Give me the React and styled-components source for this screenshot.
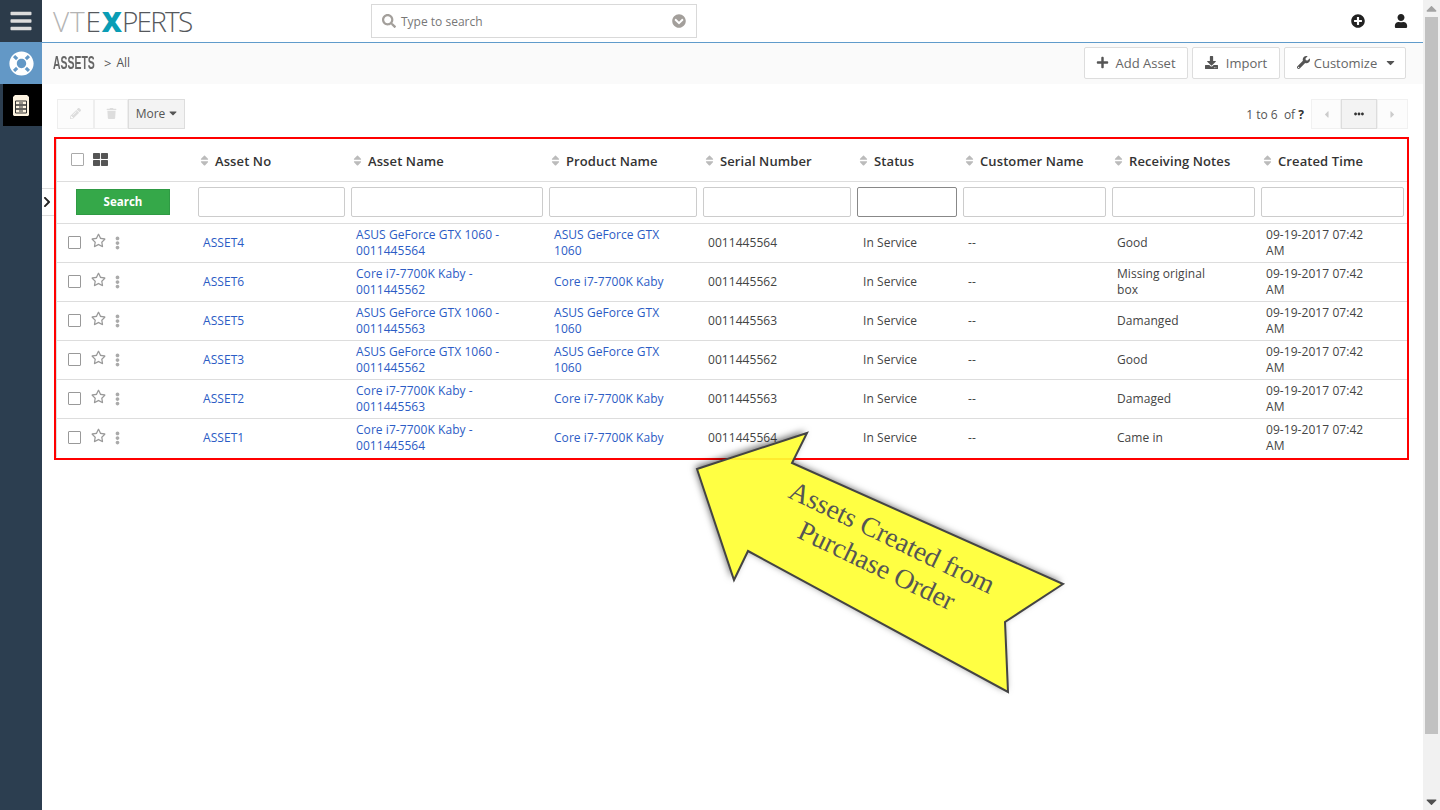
import React from "react";
import styled, { createGlobalStyle } from "styled-components";
import {
  FaBars,
  FaLifeRing,
  FaPlusCircle,
  FaUser,
  FaPlus,
  FaDownload,
  FaWrench,
  FaPencilAlt,
  FaTrash,
  FaSearch,
  FaChevronCircleDown,
  FaChevronRight,
  FaSort,
  FaRegStar,
  FaEllipsisV,
  FaEllipsisH,
  FaThLarge,
  FaCaretLeft,
  FaCaretRight,
  FaCaretDown,
  FaCaretUp,
} from "react-icons/fa";

const COLUMNS = ["Asset No", "Asset Name", "Product Name", "Serial Number", "Status", "Customer Name", "Receiving Notes", "Created Time"];

const ROWS = [
  ["ASSET4", "ASUS GeForce GTX 1060 - 0011445564", "ASUS GeForce GTX 1060", "0011445564", "Good"],
  ["ASSET6", "Core i7-7700K Kaby - 0011445562", "Core i7-7700K Kaby", "0011445562", "Missing original box"],
  ["ASSET5", "ASUS GeForce GTX 1060 - 0011445563", "ASUS GeForce GTX 1060", "0011445563", "Damanged"],
  ["ASSET3", "ASUS GeForce GTX 1060 - 0011445562", "ASUS GeForce GTX 1060", "0011445562", "Good"],
  ["ASSET2", "Core i7-7700K Kaby - 0011445563", "Core i7-7700K Kaby", "0011445563", "Damaged"],
  ["ASSET1", "Core i7-7700K Kaby - 0011445564", "Core i7-7700K Kaby", "0011445564", "Came in"],
];

const ARROW_POINTS = "27,38 137,2 122,32 393,153 335,191 338,261 78,120 64,149";

export default function App() {
  return (
    <Page>
      <GlobalStyle />
      <Sidebar>
        <Burger><FaBars /></Burger>
        <HelpTile><FaLifeRing /></HelpTile>
        <ModuleTile>
          <svg width="16" height="21" viewBox="0 0 16 21">
            <path d="M2 0h12l2 2v18l-1 1H1l-1-1V2z" fill="#fdf3e0" />
            <path d="M2.500 6h11v4h-11zM2.500 10h11v4h-11zM2.500 14h11v4h-11z" fill="none" stroke="#333" strokeWidth="1" />
            <path d="M6 8h4M6 12h4M6 16h4" stroke="#333" strokeWidth="1.200" />
          </svg>
        </ModuleTile>
      </Sidebar>

      <Main>
        <TopBar>
          <Logo>
            <LogoLight>VT</LogoLight>E<LogoX>X</LogoX><LogoTail>PERTS</LogoTail>
          </Logo>
          <SearchBox>
            <FaSearch />
            <SearchText>Type to search</SearchText>
            <FaChevronCircleDown />
          </SearchBox>
          <TopIcons>
            <FaPlusCircle />
            <FaUser />
          </TopIcons>
        </TopBar>

        <SubHeader>
          <Crumbs>
            <ModuleName>ASSETS</ModuleName>
            <Caret>&gt;</Caret>
            <CrumbAll>All</CrumbAll>
          </Crumbs>
          <HeaderActions>
            <ActionButton $width={104} $gap={6}><FaPlus /> Add Asset</ActionButton>
            <ActionButton $width={88} $gap={8}><FaDownload /> Import</ActionButton>
            <ActionButton $width={122} $gap={4} $pad={4}>
              <FaWrench /> Customize <ButtonCaret />
            </ActionButton>
          </HeaderActions>
        </SubHeader>

        <Content>
          <CollapseTab><FaChevronRight /></CollapseTab>
          <Toolbar>
            <ToolGroup>
              <ToolButton $width={37}><FaPencilAlt /></ToolButton>
              <ToolButton $width={34}><FaTrash /></ToolButton>
              <MoreButton>More <FaCaretDown /></MoreButton>
            </ToolGroup>
            <Paging>
              <PageCount>1 to 6&nbsp; of <b>?</b></PageCount>
              <Pager>
                <PagerButton $width={30}><FaCaretLeft /></PagerButton>
                <PagerButton $width={36} $active><FaEllipsisH /></PagerButton>
                <PagerButton $width={31}><FaCaretRight /></PagerButton>
              </Pager>
            </Paging>
          </Toolbar>

          <TableFrame>
            <HeadRow>
              <HeadTools>
                <HeadCheck />
                <FaThLarge />
              </HeadTools>
              {COLUMNS.map((c) => (
                <HeadCell key={c}><FaSort />{c}</HeadCell>
              ))}
            </HeadRow>
            <FilterRow>
              <SearchCell><SearchButton>Search</SearchButton></SearchCell>
              {COLUMNS.map((c) => (
                <FilterCell key={c}><FilterInput $focused={c === "Status"} /></FilterCell>
              ))}
            </FilterRow>
            {ROWS.map((r) => (
              <DataRow key={r[0]}>
                <RowTools>
                  <RowCheck />
                  <FaRegStar />
                  <FaEllipsisV />
                </RowTools>
                <Cell><Linked>{r[0]}</Linked></Cell>
                <Cell><Linked>{r[1]}</Linked></Cell>
                <Cell><Linked>{r[2]}</Linked></Cell>
                <Cell>{r[3]}</Cell>
                <StatusCell>In Service</StatusCell>
                <Cell>--</Cell>
                <Cell>{r[4]}</Cell>
                <Cell>09-19-2017 07:42 AM</Cell>
              </DataRow>
            ))}
          </TableFrame>

          <Callout width="400" height="300" viewBox="0 0 400 300">
            <defs>
              <filter id="callout-shadow" x="-10%" y="-10%" width="120%" height="120%">
                <feGaussianBlur in="SourceAlpha" stdDeviation="3.500" />
                <feOffset dx="-2" dy="-2" result="blur" />
                <feFlood floodColor="#000" floodOpacity="0.6" />
                <feComposite in2="blur" operator="in" />
                <feComposite in2="SourceAlpha" operator="out" />
              </filter>
            </defs>
            <polygon points={ARROW_POINTS} fill="#000" filter="url(#callout-shadow)" />
            <polygon points={ARROW_POINTS} fill="#ffff33" fillOpacity="0.92" stroke="#444" strokeWidth="2" />
            <CalloutText transform="translate(117 66) rotate(25.700)">Assets Created from</CalloutText>
            <CalloutText transform="translate(126 106) rotate(25.700)">Purchase Order</CalloutText>
          </Callout>
        </Content>
      </Main>

      <Scrollbar>
        <FaCaretUp />
        <Thumb />
        <ScrollDown />
      </Scrollbar>
    </Page>
  );
}

const GlobalStyle = createGlobalStyle`
  html, body {
    margin: 0;
    padding: 0;
    background: #fff;
    overflow: hidden;
  }
  * {
    box-sizing: border-box;
  }
`;

const GRID = "138px 153px 198px 154px 154px 106px 149px 149px 149px";

const Page = styled.div`
  display: flex;
  width: 1440px;
  height: 810px;
  overflow: hidden;
  font-family: "Open Sans", sans-serif;
  font-size: 12px;
  color: #444;
`;

const Sidebar = styled.aside`
  width: 42px;
  flex: none;
  background: #2c3e50;
  display: flex;
  flex-direction: column;
`;

const Burger = styled.div`
  height: 42px;
  display: flex;
  align-items: center;
  justify-content: center;
  background: #2c3b4a;
  color: #dcdcdc;
  font-size: 24px;
`;

const HelpTile = styled.div`
  height: 42px;
  display: flex;
  align-items: center;
  justify-content: center;
  background: #6398c6;
  color: #fff;
  font-size: 25px;
`;

const ModuleTile = styled.div`
  height: 42px;
  margin-left: 3px;
  padding-right: 3px;
  display: flex;
  align-items: center;
  justify-content: center;
  background: #000;
`;

const Main = styled.main`
  flex: 1;
  min-width: 0;
  display: flex;
  flex-direction: column;
`;

const TopBar = styled.header`
  height: 43px;
  flex: none;
  display: flex;
  align-items: center;
  border-bottom: 1px solid #5f9bcb;
  background: #fff;
`;

const Logo = styled.div`
  width: 329px;
  padding-left: 11px;
  font-family: "Open Sans", sans-serif;
  font-weight: 300;
  font-size: 28px;
  letter-spacing: 0.8px;
  color: #55585c;
`;

const LogoLight = styled.span`
  color: #b4b4b4;
`;

const LogoX = styled.span`
  font-weight: 800;
  letter-spacing: 0;
  color: #0a9db5;
`;

const LogoTail = styled.span`
  letter-spacing: -1.8px;
`;

const SearchBox = styled.div`
  width: 326px;
  height: 34px;
  display: flex;
  align-items: center;
  padding: 0 10px 0 10px;
  border: 1px solid #d9d9d9;
  color: #a39f9b;
  font-size: 14px;
`;

const SearchText = styled.span`
  flex: 1;
  margin-left: 5px;
  font-size: 12px;
  color: #777;
`;

const TopIcons = styled.div`
  margin-left: auto;
  display: flex;
  align-items: center;
  gap: 29px;
  padding-right: 15px;
  color: #222;
  font-size: 14px;
`;

const SubHeader = styled.div`
  height: 41px;
  flex: none;
  display: flex;
  align-items: center;
  justify-content: space-between;
  padding: 0 17px 2px 11px;
  background: #fafafa;
`;

const Crumbs = styled.div`
  display: flex;
  align-items: center;
  gap: 5px;
`;

const ModuleName = styled.span`
  width: 46px;
  font-family: "Liberation Sans", sans-serif;
  font-weight: 700;
  font-size: 19px;
  color: #666;
  transform: scaleX(0.55);
  transform-origin: left center;
`;

const Caret = styled.span`
  font-size: 13px;
  color: #555;
`;

const CrumbAll = styled.span`
  font-size: 12px;
  color: #555;
`;

const HeaderActions = styled.div`
  display: flex;
  gap: 4px;
`;

const ActionButton = styled.button`
  width: ${(p) => p.$width}px;
  height: 32px;
  display: flex;
  align-items: center;
  justify-content: center;
  gap: ${(p) => p.$gap}px;
  padding: 0 0 0 ${(p) => p.$pad || 0}px;
  border: 1px solid #ddd;
  border-radius: 2px;
  background: #fff;
  color: #666;
  font-family: "Open Sans", sans-serif;
  font-size: 13px;

  svg {
    color: #555;
    font-size: 13px;
  }
`;

const ButtonCaret = styled(FaCaretDown)`
  margin-left: 3px;
`;

const Content = styled.div`
  position: relative;
  flex: 1;
  padding: 15px 15px 0 12px;
`;

const CollapseTab = styled.div`
  position: absolute;
  left: 0;
  top: 104px;
  width: 12px;
  height: 28px;
  padding-right: 2px;
  display: flex;
  align-items: center;
  justify-content: center;
  border-top: 1px solid #ddd;
  border-bottom: 1px solid #ddd;
  background: #fff;
  color: #222;
  font-size: 12px;
`;

const Toolbar = styled.div`
  display: flex;
  justify-content: space-between;
  align-items: center;
  height: 30px;
  padding-left: 3px;
`;

const ToolGroup = styled.div`
  display: flex;
  height: 100%;
`;

const ToolButton = styled.button`
  width: ${(p) => p.$width}px;
  padding: 0;
  border: 1px solid #eee;
  background: #fcfcfc;
  color: #ddd;
  font-size: 11px;
`;

const MoreButton = styled.button`
  width: 57px;
  height: 30px;
  padding: 0 0 2px 2px;
  display: flex;
  align-items: center;
  justify-content: center;
  gap: 2px;
  border: 1px solid #ddd;
  background: #f3f3f3;
  color: #555;
  font-family: "Open Sans", sans-serif;
  font-size: 12px;
`;

const Paging = styled.div`
  display: flex;
  align-items: center;
  height: 100%;
  gap: 7px;
`;

const PageCount = styled.span`
  color: #555;

  b {
    color: #333;
  }
`;

const Pager = styled.div`
  display: flex;
  height: 100%;
`;

const PagerButton = styled.button`
  width: ${(p) => p.$width}px;
  padding: 0;
  display: flex;
  align-items: center;
  justify-content: center;
  border: 1px solid ${(p) => (p.$active ? "#ddd" : "#f1f1f1")};
  background: ${(p) => (p.$active ? "#f3f3f3" : "#fcfcfc")};
  color: ${(p) => (p.$active ? "#333" : "#ccc")};
  font-size: ${(p) => (p.$active ? "10px" : "11px")};
`;

const TableFrame = styled.section`
  margin: 8px 0 0;
  width: 1355px;
  height: 323px;
  border: 2px solid #f00;
`;

const HeadRow = styled.div`
  display: grid;
  grid-template-columns: ${GRID};
  height: 43px;
  padding-top: 1px;
  border-left: 1px solid #ddd;
  border-bottom: 1px solid #ddd;
  align-items: center;
`;

const HeadTools = styled.div`
  display: flex;
  align-items: center;
  gap: 9px;
  padding-left: 14px;
  color: #555;
  font-size: 15px;

  svg {
    margin-top: -2px;
  }
`;

const HeadCheck = styled.span`
  width: 13px;
  height: 13px;
  margin-top: -2px;
  border: 1px solid #aaa;
  border-radius: 1px;
  background: #fff;
`;

const HeadCell = styled.div`
  display: flex;
  align-items: center;
  gap: 6px;
  padding-left: 5px;
  font-weight: 600;
  font-size: 13px;
  letter-spacing: 0.1px;
  color: #333;
  white-space: nowrap;

  svg {
    color: #bbb;
    width: 9px;
    height: 13px;
  }
`;

const FilterRow = styled.div`
  display: grid;
  grid-template-columns: ${GRID};
  height: 42px;
  padding-bottom: 1px;
  border-left: 1px solid #ddd;
  border-bottom: 1px solid #ddd;
  align-items: center;
`;

const SearchCell = styled.div`
  padding: 0 0 1px 19px;
`;

const SearchButton = styled.button`
  display: block;
  width: 94px;
  height: 26px;
  padding: 0;
  border: 1px solid #2f9a44;
  background: #35a849;
  color: #fff;
  font-family: "Open Sans", sans-serif;
  font-size: 11.500px;
  font-weight: 700;
`;

const FilterCell = styled.div`
  padding: 0 3px;
`;

const FilterInput = styled.input`
  display: block;
  width: 100%;
  height: 30px;
  border: 1px solid ${(p) => (p.$focused ? "#888" : "#ccc")};
  border-radius: 2px;
  background: #fff;
`;

const DataRow = styled.div`
  display: grid;
  grid-template-columns: ${GRID};
  height: 39px;
  border-left: 1px solid #ddd;
  border-bottom: 1px solid #ddd;
  align-items: center;

  &:last-child {
    border-bottom-color: transparent;
  }
`;

const RowTools = styled.div`
  display: flex;
  align-items: center;
  gap: 10px;
  margin-top: -2px;
  padding-left: 11px;
  color: #999;

  svg:first-of-type {
    margin-top: -4px;
    font-size: 15px;
  }

  svg:last-of-type {
    width: 5px;
    height: 14px;
    margin-left: -1px;
    margin-top: 1px;
    color: #aaa;
  }
`;

const RowCheck = styled.span`
  width: 13px;
  height: 13px;
  border: 1px solid #999;
  border-radius: 1px;
  background: #fff;
`;

const Cell = styled.div`
  padding: 0 34px 0 8px;
  line-height: 16px;
  letter-spacing: 0.06px;
  color: #444;
`;

const StatusCell = styled(Cell)`
  padding-left: 9px;
`;

const Linked = styled.a`
  color: #2c5cc5;
`;

const Callout = styled.svg`
  position: absolute;
  left: 628px;
  top: 347px;
  overflow: visible;
  pointer-events: none;
`;

const CalloutText = styled.text`
  font-family: "Liberation Serif", serif;
  font-size: 27.500px;
  fill: #555;
`;

const Scrollbar = styled.div`
  width: 17px;
  flex: none;
  display: flex;
  flex-direction: column;
  align-items: center;
  justify-content: space-between;
  background: #f1f1f1;
  color: #a3a3a3;
  font-size: 11px;

  svg {
    height: 17px;
    flex: none;
  }
`;

const ScrollDown = styled(FaCaretDown)`
  color: #505050;
`;

const Thumb = styled.div`
  width: 13px;
  flex: 1;
  margin-bottom: 59px;
  background: #c1c1c1;
`;
